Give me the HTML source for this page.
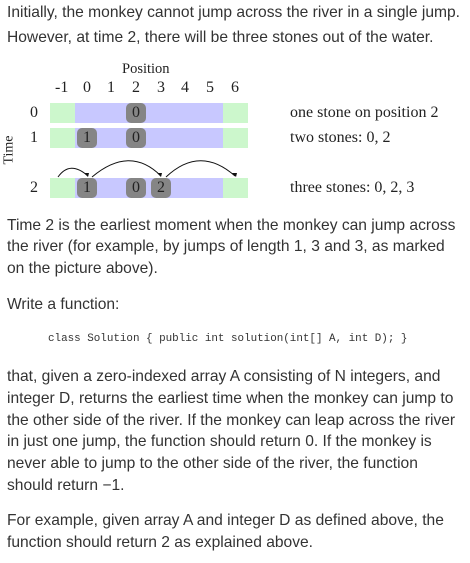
<!DOCTYPE html>
<html><head><style>
html,body{margin:0;padding:0;background:#fff;width:470px;height:563px;overflow:hidden;position:relative}
.t{position:absolute;left:7px;font:15.6px/1 "Liberation Sans",sans-serif;color:#333;white-space:nowrap}
.s{position:absolute;font:16px/1 "Liberation Serif",serif;color:#222;white-space:nowrap}
.code{position:absolute;left:48px;top:334px;font:10.9px/1 "Liberation Mono",monospace;color:#333;white-space:nowrap}
.bar{position:absolute;height:20px}
.g{background:#ccf7cc}.b{background:#c8c8ff}
.st{position:absolute;width:20px;height:20px;background:#858585;border-radius:5px;font:16px/20px "Liberation Serif",serif;color:#222;text-align:center}
</style></head><body>
<div class="t" style="top:5px">Initially, the monkey cannot jump across the river in a single jump.</div>
<div class="t" style="top:30px">However, at time 2, there will be three stones out of the water.</div>

<div class="s" style="left:122px;top:62px;font-size:14.5px">Position</div>
<div class="s" style="left:55px;top:80px">-1</div>
<div class="s" style="left:83px;top:80px">0</div>
<div class="s" style="left:107px;top:80px">1</div>
<div class="s" style="left:132px;top:80px">2</div>
<div class="s" style="left:157px;top:80px">3</div>
<div class="s" style="left:181px;top:80px">4</div>
<div class="s" style="left:206px;top:80px">5</div>
<div class="s" style="left:231px;top:80px">6</div>

<div class="s" style="left:30px;top:105px">0</div>
<div class="s" style="left:30px;top:130px">1</div>
<div class="s" style="left:30px;top:180px">2</div>
<div class="s" style="left:-5px;top:143px;transform:rotate(-90deg);font-size:14px">Time</div>

<div class="bar g" style="left:50px;width:25px;top:103px"></div><div class="bar b" style="left:75px;width:148px;top:103px"></div><div class="bar g" style="left:223px;width:25px;top:103px"></div>
<div class="bar g" style="left:50px;width:25px;top:128px"></div><div class="bar b" style="left:75px;width:148px;top:128px"></div><div class="bar g" style="left:223px;width:25px;top:128px"></div>
<div class="bar g" style="left:50px;width:25px;top:178px"></div><div class="bar b" style="left:75px;width:148px;top:178px"></div><div class="bar g" style="left:223px;width:25px;top:178px"></div>

<div class="st" style="left:126px;top:103px">0</div>
<div class="st" style="left:77px;top:128px">1</div>
<div class="st" style="left:126px;top:128px">0</div>
<div class="st" style="left:77px;top:178px">1</div>
<div class="st" style="left:126px;top:178px">0</div>
<div class="st" style="left:151px;top:178px">2</div>

<svg style="position:absolute;left:0;top:0" width="260" height="200">
<g fill="none" stroke="#111" stroke-width="1">
<path d="M58 177 Q70 160 88 176"/>
<path d="M92 177 Q130 145 161 176"/>
<path d="M166 177 Q200 145 235 176"/>
</g>
<g fill="#111"><path d="M88 177 l-4 -4 l5 0 z"/><path d="M161 177 l-4 -4 l5 0 z"/><path d="M236 177 l-4 -4 l5 0 z"/></g>
</svg>

<div class="s" style="left:290px;top:105px">one stone on position 2</div>
<div class="s" style="left:290px;top:130px">two stones: 0, 2</div>
<div class="s" style="left:290px;top:180px">three stones: 0, 2, 3</div>

<div class="t" style="top:218px">Time 2 is the earliest moment when the monkey can jump across</div>
<div class="t" style="top:239px">the river (for example, by jumps of length 1, 3 and 3, as marked</div>
<div class="t" style="top:261px">on the picture above).</div>
<div class="t" style="top:297px">Write a function:</div>
<div class="code">class Solution { public int solution(int[] A, int D); }</div>
<div class="t" style="top:369px">that, given a zero-indexed array A consisting of N integers, and</div>
<div class="t" style="top:391px">integer D, returns the earliest time when the monkey can jump to</div>
<div class="t" style="top:413px">the other side of the river. If the monkey can leap across the river</div>
<div class="t" style="top:434px">in just one jump, the function should return 0. If the monkey is</div>
<div class="t" style="top:456px">never able to jump to the other side of the river, the function</div>
<div class="t" style="top:478px">should return −1.</div>
<div class="t" style="top:513px">For example, given array A and integer D as defined above, the</div>
<div class="t" style="top:535px">function should return 2 as explained above.</div>
</body></html>
